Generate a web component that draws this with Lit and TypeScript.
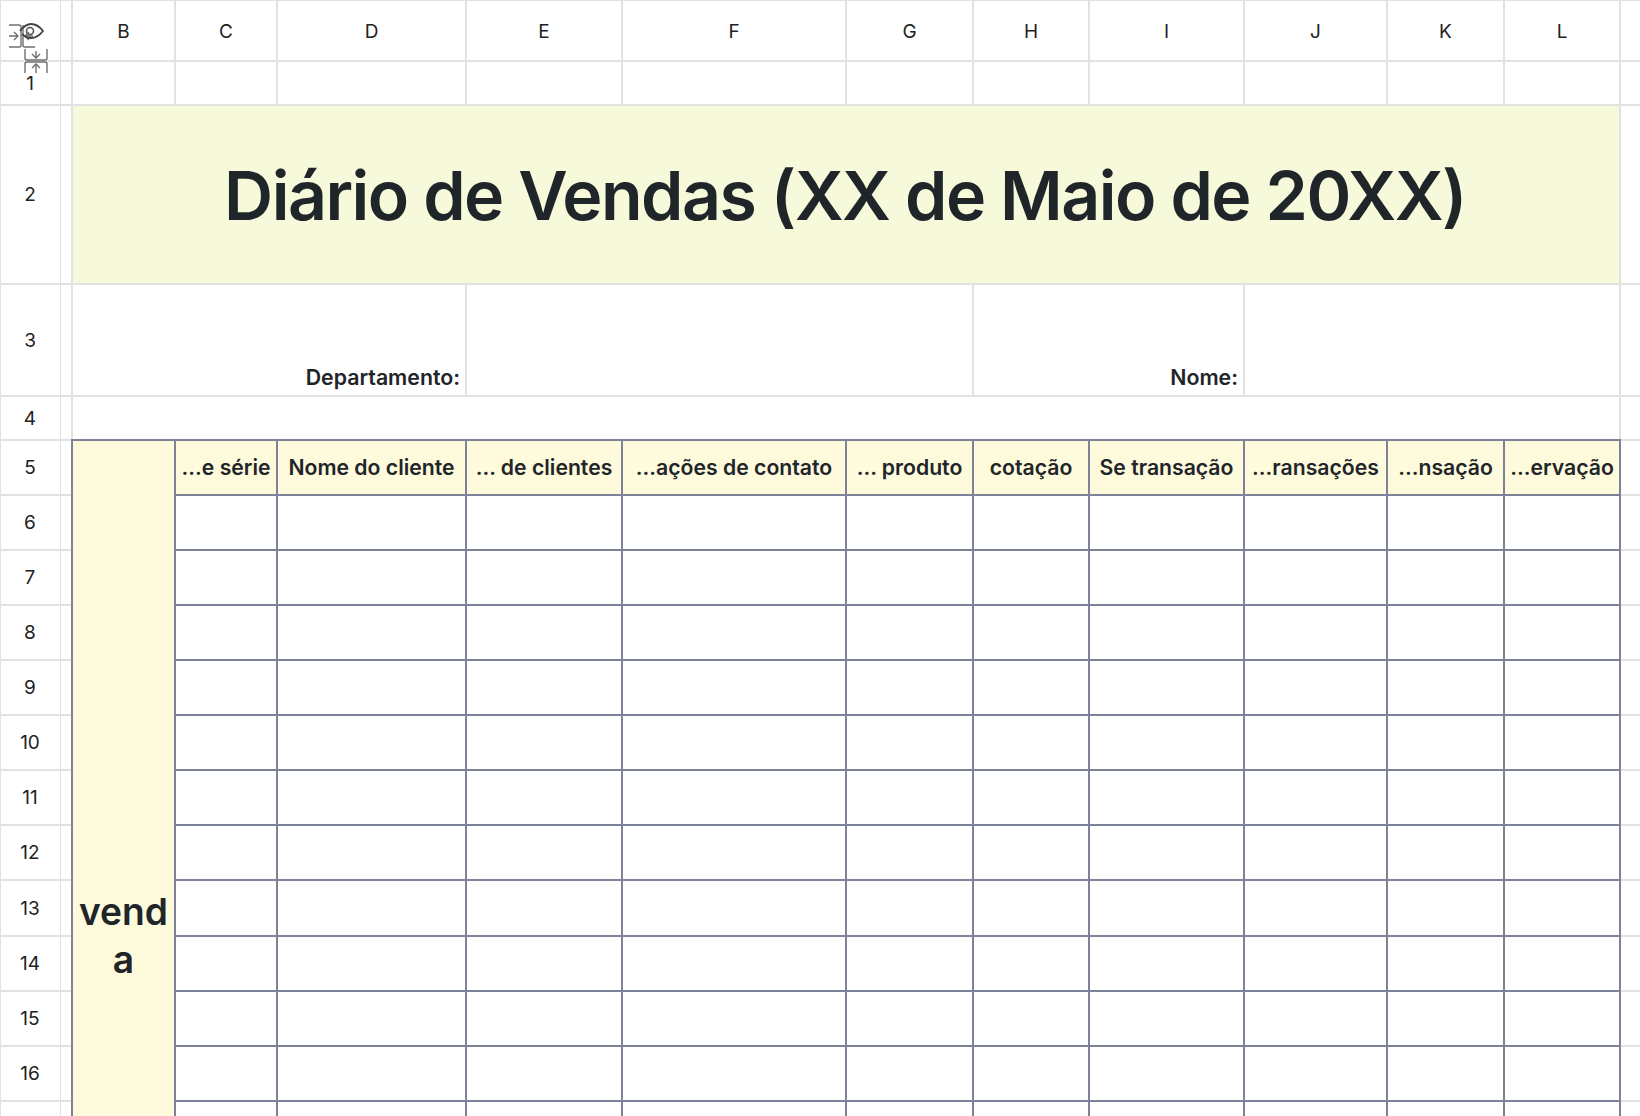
import { LitElement, html, css } from "lit";
import { customElement } from "lit/decorators.js";

const COLS = ["B", "C", "D", "E", "F", "G", "H", "I", "J", "K", "L"];
const HEAD = ["...e série", "Nome do cliente", "... de clientes", "...ações de contato", "... produto", "cotação", "Se transação", "...ransações", "...nsação", "...ervação"];
const ROWS = Array.from({ length: 12 }, (_, i) => i + 6);

@customElement("app-root")
export class AppRoot extends LitElement {
  static styles = css`
    :host { display: block; width: 1640px; height: 1116px; overflow: hidden; background: #fff; font-family: Inter, "Liberation Sans", sans-serif; color: #1f2529; }
    .sheet {
      position: relative;
      display: grid;
      box-shadow: inset 1px 1px 0 #e2e2e2;
      grid-template-columns: 61px 12px 103px 102px 189px 156px 224px 127px 116px 155px 143px 117px 116px 19px;
      grid-template-rows: 62px 44px 179px 112px 44px 54.5px;
      grid-auto-rows: 55.15px;
    }
    .c { box-sizing: border-box; border-right: 2px solid #e2e2e2; border-bottom: 2px solid #e2e2e2; display: flex; align-items: center; justify-content: center; font-size: 19px; color: #222; min-width: 0; }
    .thin { border-right-width: 1px; }
    .free { border-right: 0; }
    .letter { padding-top: 2px; }
    .title { background: #f6f9da; color: #1f2529; font-size: 68px; font-weight: 600; letter-spacing: -1.55px; padding-right: 2px; }
    .label { color: #1f2529; font-size: 21.3px; font-weight: 600; justify-content: flex-end; align-items: flex-end; padding: 0 5px 5px 0; }
    .t { border-right: 2px solid #7d8299; border-bottom: 2px solid #7d8299; }
    .hd { background: #fefadc; color: #1f2529; font-size: 21.2px; font-weight: 600; margin-top: -2px; border-top: 2px solid #7d8299; white-space: nowrap; }
    .side { background: #fefadc; color: #1f2529; margin: -2px 0 0 -2px; border-left: 2px solid #7d8299; border-top: 2px solid #7d8299; font-size: 37.2px; font-weight: 600; text-align: center; line-height: 48px; }
    .icons { position: absolute; left: 0; top: 0; width: 60px; height: 80px; pointer-events: none; }
  `;

  private at(col: number, row: number, cspan = 1, rspan = 1) {
    return `grid-column:${col}/span ${cspan};grid-row:${row}/span ${rspan}`;
  }

  render() {
    return html`<div class="sheet">
      <div class="c thin" style=${this.at(1, 1)}></div>
      <div class="c" style=${this.at(2, 1)}></div>
      ${COLS.map((c, i) => html`<div class="c letter" style=${this.at(i + 3, 1)}>${c}</div>`)}
      <div class="c free" style=${this.at(14, 1)}></div>

      <div class="c thin" style=${this.at(1, 2)}>1</div>
      <div class="c" style=${this.at(2, 2)}></div>
      ${COLS.map((_, i) => html`<div class="c" style=${this.at(i + 3, 2)}></div>`)}
      <div class="c free" style=${this.at(14, 2)}></div>

      <div class="c thin" style=${this.at(1, 3)}>2</div>
      <div class="c" style=${this.at(2, 3)}></div>
      <div class="c title" style=${this.at(3, 3, 11)}>Diário de Vendas (XX de Maio de 20XX)</div>
      <div class="c free" style=${this.at(14, 3)}></div>

      <div class="c thin" style=${this.at(1, 4)}>3</div>
      <div class="c" style=${this.at(2, 4)}></div>
      <div class="c label" style=${this.at(3, 4, 3)}>Departamento:</div>
      <div class="c" style=${this.at(6, 4, 3)}></div>
      <div class="c label" style=${this.at(9, 4, 2)}>Nome:</div>
      <div class="c" style=${this.at(11, 4, 3)}></div>
      <div class="c free" style=${this.at(14, 4)}></div>

      <div class="c thin" style=${this.at(1, 5)}>4</div>
      <div class="c" style=${this.at(2, 5)}></div>
      <div class="c" style=${this.at(3, 5, 11)}></div>
      <div class="c free" style=${this.at(14, 5)}></div>

      <div class="c thin" style=${this.at(1, 6)}>5</div>
      <div class="c" style=${this.at(2, 6)}></div>
      ${HEAD.map((h, i) => html`<div class="c t hd" style=${this.at(i + 4, 6)}>${h}</div>`)}
      <div class="c free" style=${this.at(14, 6)}></div>

      ${ROWS.map(
        (r, ri) => html`
          <div class="c thin" style=${this.at(1, ri + 7)}>${r < 17 ? r : ""}</div>
          <div class="c" style=${this.at(2, ri + 7)}></div>
          ${HEAD.map((_, i) => html`<div class="c t" style=${this.at(i + 4, ri + 7)}></div>`)}
          <div class="c free" style=${this.at(14, ri + 7)}></div>
        `
      )}
      <div class="c t side" style=${this.at(3, 6, 1, 18)}>vend<br />a</div>

      <svg class="icons" viewBox="0 0 60 80" fill="none" stroke="#707070" stroke-width="1.4">
        <path d="M9 25h10a2 2 0 0 1 2 2v18a2 2 0 0 1-2 2H9" />
        <path d="M9 36h9M14 32l4 4-4 4" />
        <path d="M35 47H25a2 2 0 0 1-2-2V25" />
        <path d="M33 36h-8M29 32l-4 4 4 4" />
        <path d="M20 31c4-5 7-7 11-7 5 0 9 3 12 7-3 4-7 7-12 7-4 0-7-2-9-4" stroke="#444" stroke-width="1.8" />
        <circle cx="30" cy="31" r="3.5" stroke="#555" stroke-width="1.6" />
        <path d="M25 49v9a2 2 0 0 0 2 2h18a2 2 0 0 0 2-2v-9" />
        <path d="M36 51v7M32 54l4 4 4-4" />
        <path d="M25 73v-9a2 2 0 0 1 2-2h18a2 2 0 0 1 2 2v9" />
        <path d="M36 73v-9M32 68l4-4 4 4" />
      </svg>
    </div>`;
  }
}
